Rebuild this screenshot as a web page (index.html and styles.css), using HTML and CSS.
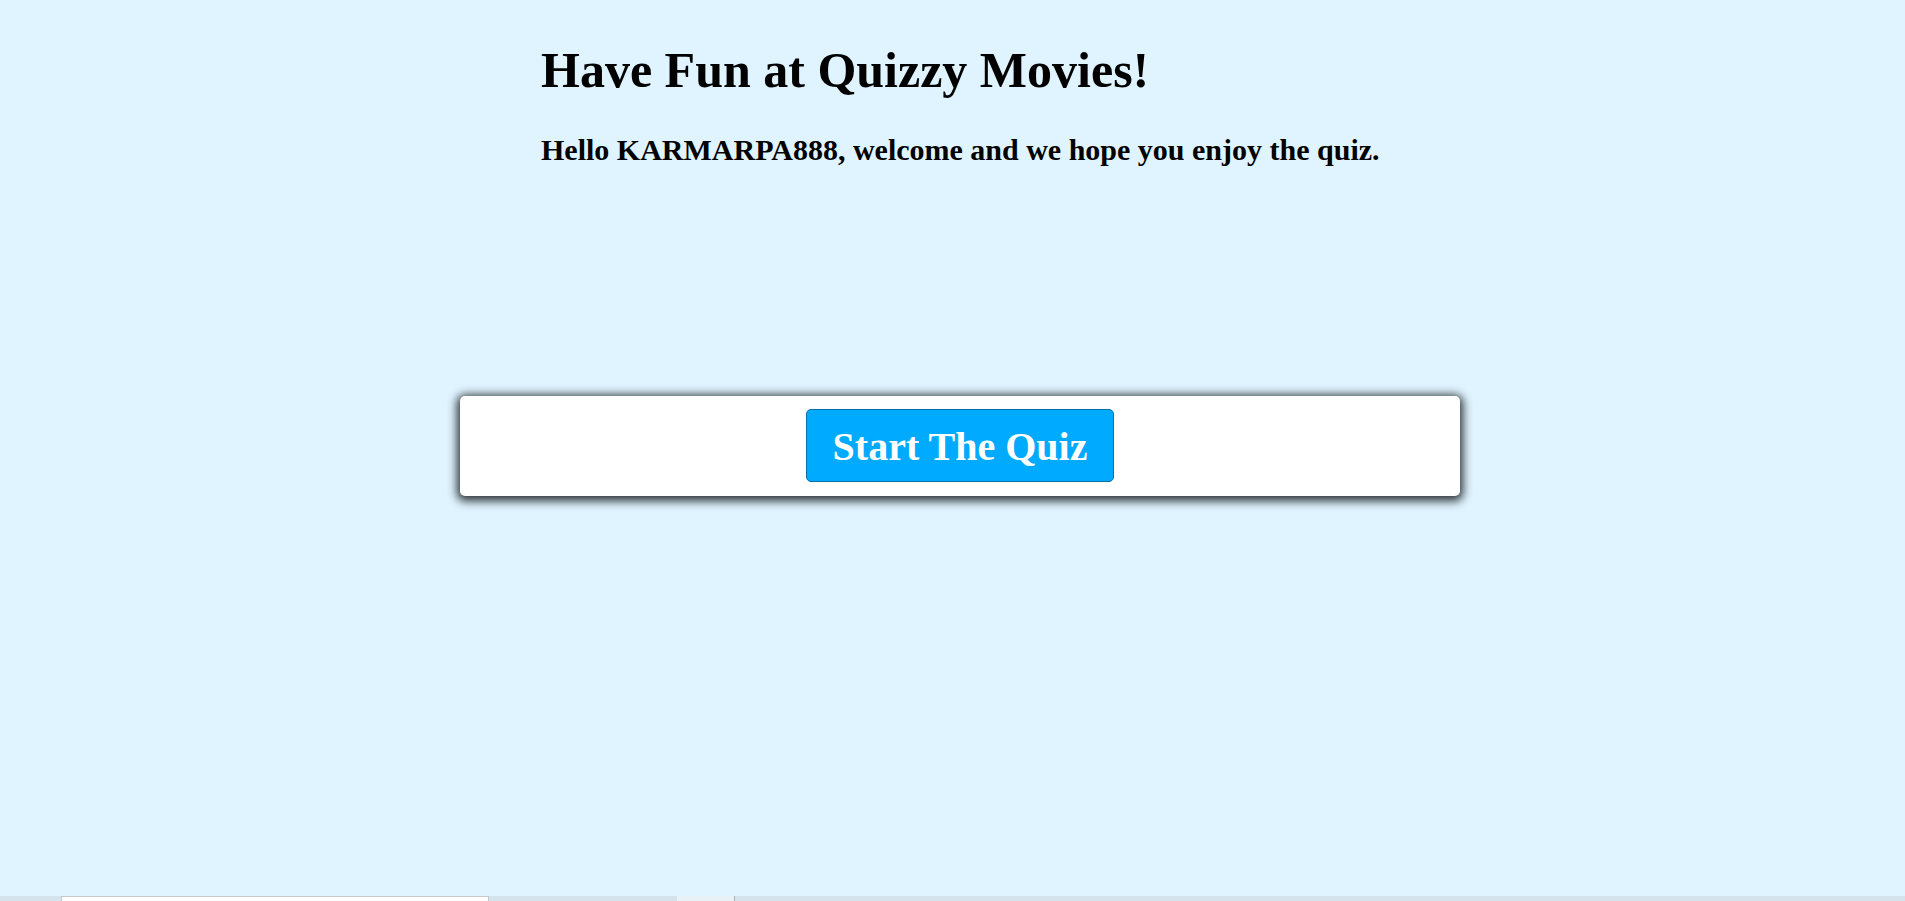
FILE: index.html
```html
<!DOCTYPE html>
<html lang="en">
<head>
<meta charset="utf-8">
<title>Quizzy Movies</title>
<link rel="stylesheet" href="styles.css">
</head>
<body>
<div class="page">
  <main class="main">
    <header class="intro">
      <h1 class="title">Have Fun at Quizzy Movies!</h1>
      <h2 class="greeting">Hello KARMARPA888, welcome and we hope you enjoy the quiz.</h2>
    </header>
    <section class="card">
      <button class="start-btn" type="button">Start The Quiz</button>
    </section>
  </main>
  <div class="strip">
    <div class="strip-field"></div>
    <div class="strip-gap"></div>
    <div class="strip-tab"></div>
    <div class="strip-rest"></div>
  </div>
</div>
</body>
</html>
```

FILE: styles.css
```css
html, body {
  margin: 0;
  padding: 0;
}

body {
  background: #e0f4ff;
  font-family: "Liberation Serif", "Times New Roman", serif;
  color: #000;
}

.page {
  min-height: 100vh;
  display: flex;
  flex-direction: column;
}

.main {
  flex: 1;
  display: flex;
  flex-direction: column;
  padding-top: 41px;
}

.intro {
  margin-left: 541px;
}

.title {
  margin: 0;
  font-size: 50px;
  line-height: 58px;
  font-weight: bold;
}

.greeting {
  margin: 34px 0 0;
  font-size: 30px;
  line-height: 34px;
  font-weight: bold;
}

.card {
  margin: 229px 0 0 460px;
  width: 1000px;
  height: 100px;
  box-sizing: border-box;
  background: #fff;
  border-radius: 5px;
  box-shadow: 0 2px 10px 3px rgba(10, 16, 20, 0.85);
  display: flex;
  justify-content: center;
  align-items: flex-start;
  padding-top: 13px;
}

.start-btn {
  font-family: "Liberation Serif", "Times New Roman", serif;
  font-size: 40px;
  line-height: 47px;
  font-weight: bold;
  color: #fff;
  background: #00aaff;
  border: 1px solid #0a6fa8;
  border-radius: 5px;
  padding: 13px 26px 11px;
  cursor: pointer;
}

.strip {
  height: 5px;
  display: flex;
  background: #d4e3ec;
}

.strip-field {
  margin-left: 61px;
  width: 426px;
  background: #fff;
  border: 1px solid #c4c8cc;
  border-bottom: none;
}

.strip-gap {
  width: 188px;
}

.strip-tab {
  width: 57px;
  background: #e8f1f5;
  border-right: 1px solid #a9b0b4;
}

.strip-rest {
  flex: 1;
}
```
